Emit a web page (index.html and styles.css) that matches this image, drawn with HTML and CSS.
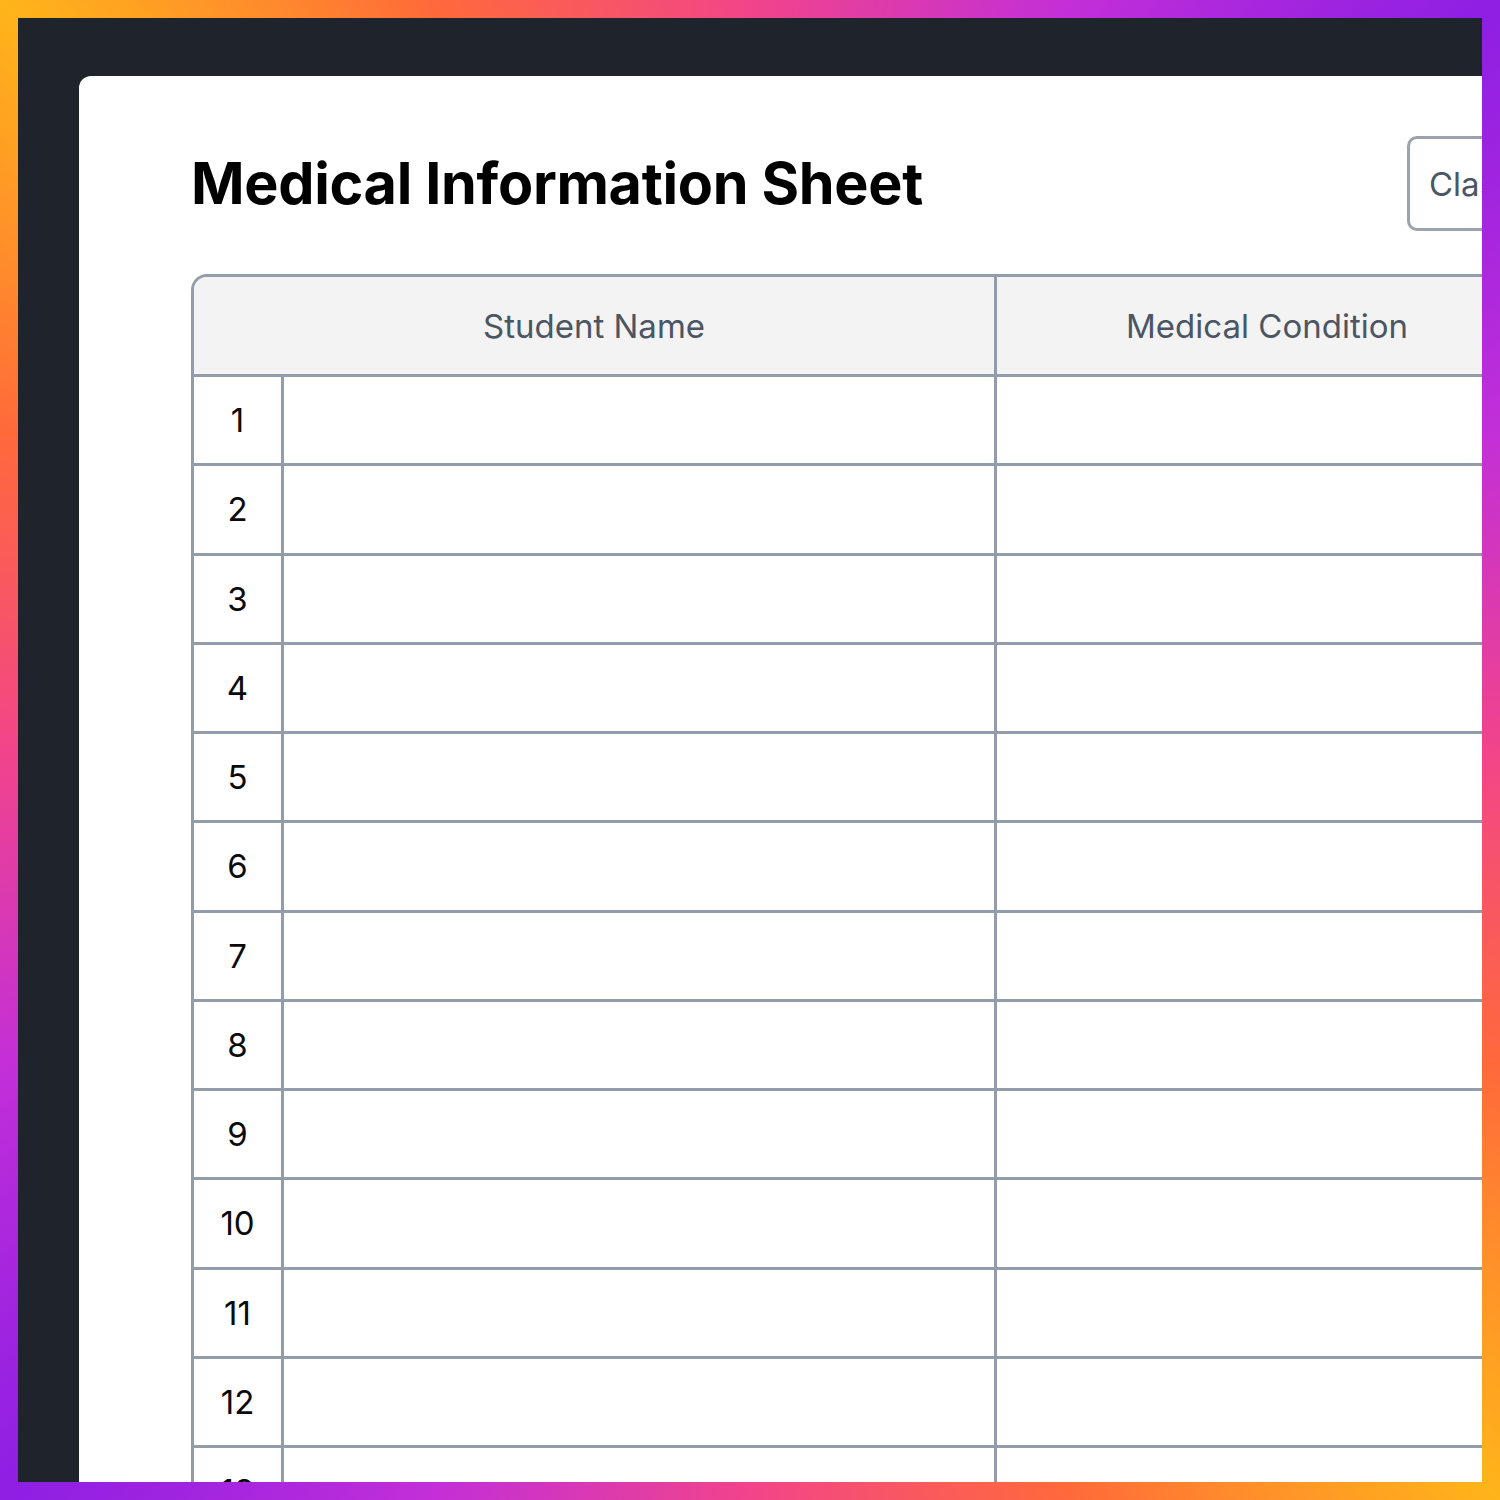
FILE: index.html
```html
<!DOCTYPE html>
<html lang="en">
<head>
<meta charset="utf-8">
<title>Medical Information Sheet</title>
<link rel="stylesheet" href="styles.css">
</head>
<body>
<div class="frame">
  <div class="stage">
    <div class="card">
      <div class="card-header">
        <h1 class="title">Medical Information Sheet</h1>
        <div class="class-box">Class: ______</div>
      </div>
      <table class="sheet">
        <colgroup>
          <col class="col-num">
          <col class="col-name">
          <col class="col-cond">
          <col class="col-extra">
        </colgroup>
        <thead>
          <tr class="head-row">
            <th colspan="2">Student Name</th>
            <th>Medical Condition</th>
            <th>Medication</th>
          </tr>
        </thead>
        <tbody>
          <tr><td class="num">1</td><td></td><td></td><td></td></tr>
          <tr><td class="num">2</td><td></td><td></td><td></td></tr>
          <tr><td class="num">3</td><td></td><td></td><td></td></tr>
          <tr><td class="num">4</td><td></td><td></td><td></td></tr>
          <tr><td class="num">5</td><td></td><td></td><td></td></tr>
          <tr><td class="num">6</td><td></td><td></td><td></td></tr>
          <tr><td class="num">7</td><td></td><td></td><td></td></tr>
          <tr><td class="num">8</td><td></td><td></td><td></td></tr>
          <tr><td class="num">9</td><td></td><td></td><td></td></tr>
          <tr><td class="num">10</td><td></td><td></td><td></td></tr>
          <tr><td class="num">11</td><td></td><td></td><td></td></tr>
          <tr><td class="num">12</td><td></td><td></td><td></td></tr>
          <tr><td class="num">13</td><td></td><td></td><td></td></tr>
          <tr><td class="num">14</td><td></td><td></td><td></td></tr>
        </tbody>
      </table>
    </div>
  </div>
</div>
</body>
</html>
```

FILE: styles.css
```css
html, body {
  margin: 0;
  padding: 0;
}

body {
  font-family: Inter, "Noto Sans", "Liberation Sans", sans-serif;
  width: 1500px;
  height: 1500px;
  overflow: hidden;
}

.frame {
  box-sizing: border-box;
  width: 1500px;
  height: 1500px;
  padding: 18px;
  background: conic-gradient(from -45deg at 50% 50%,
    #ffb41a 0%,
    #ff6a3a 6%,
    #f2448a 12.5%,
    #c22fd8 19%,
    #8e1fe3 25%,
    #c22fd8 31%,
    #f2448a 37.5%,
    #ff6a3a 44%,
    #ffb41a 50%,
    #ff6a3a 56%,
    #f2448a 62.5%,
    #c22fd8 69%,
    #8e1fe3 75%,
    #c22fd8 81%,
    #f2448a 87.5%,
    #ff6a3a 94%,
    #ffb41a 100%);
}

.stage {
  box-sizing: border-box;
  width: 1464px;
  height: 1464px;
  background: #1e232c;
  overflow: hidden;
  padding: 58px 0 0 61px;
}

.card {
  box-sizing: border-box;
  width: 1700px;
  min-height: 1600px;
  background: #ffffff;
  border-radius: 12px;
  padding: 60px 113px 0 112px;
}

.card-header {
  display: flex;
  align-items: center;
  justify-content: space-between;
}

.title {
  margin: 0;
  font-size: 57.5px;
  line-height: 1.2;
  font-weight: 700;
  color: #000000;
  letter-spacing: -0.3px;
}

.class-box {
  box-sizing: border-box;
  width: 259px;
  height: 95px;
  border: 3px solid #9ca3af;
  border-radius: 10px;
  padding: 0 19px;
  display: flex;
  align-items: center;
  font-size: 33px;
  color: #4b5563;
  white-space: nowrap;
  overflow: hidden;
}

.sheet {
  margin-top: 43px;
  table-layout: fixed;
  width: 1800px;
  border-collapse: separate;
  border-spacing: 0;
  border-top: 3px solid #939cab;
  border-left: 3px solid #939cab;
  border-top-left-radius: 16px;
}

.col-num { width: 90px; }
.col-name { width: 713px; }
.col-cond { width: 543px; }
.col-extra { width: 454px; }

.sheet th,
.sheet td {
  border-right: 3px solid #939cab;
  border-bottom: 3px solid #939cab;
  padding: 0;
  vertical-align: middle;
}

.head-row {
  height: 100px;
}

.sheet th {
  background: #f3f3f3;
  font-size: 33px;
  font-weight: 400;
  color: #4b5563;
  text-align: center;
}

.sheet th:first-child {
  border-top-left-radius: 13px;
}

.sheet tbody tr {
  height: 89.25px;
}

.sheet td.num {
  text-align: center;
  font-size: 33px;
  color: #0a0a0a;
}
```
